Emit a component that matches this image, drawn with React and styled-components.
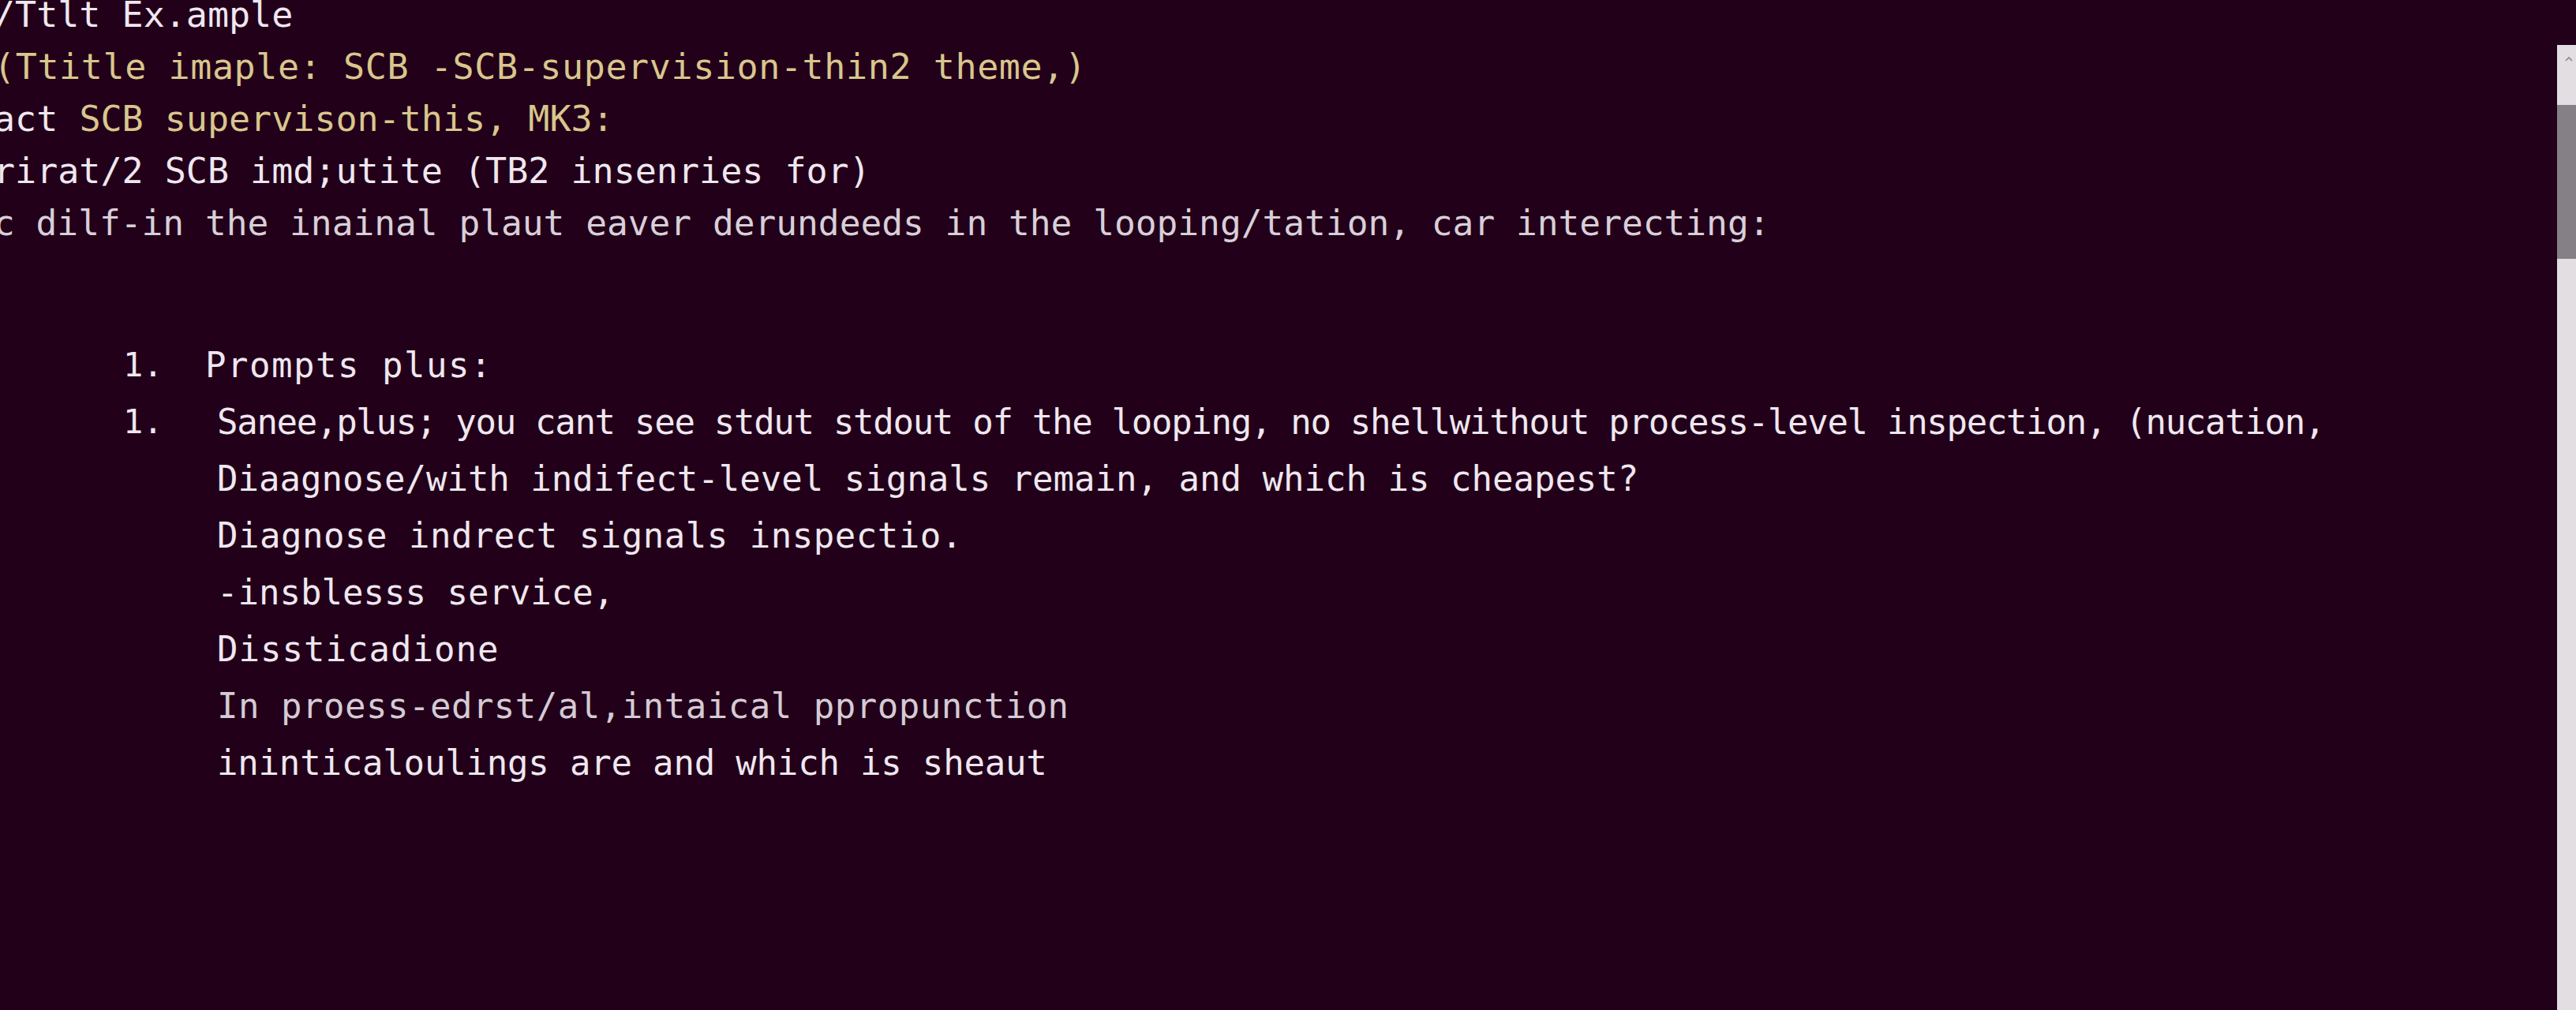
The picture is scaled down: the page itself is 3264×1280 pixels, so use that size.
import React from "react";
import styled, { createGlobalStyle } from "styled-components";

const GlobalStyle = createGlobalStyle`
  html, body {
    margin: 0;
    padding: 0;
    background: #22001a;
    overflow: hidden;
  }
`;

const Screen = styled.div`
  display: flex;
  width: 3264px;
  height: 1280px;
  overflow: hidden;
  background: #22001a;
  font-family: "DejaVu Sans Mono", "Liberation Mono", monospace;
`;

const Output = styled.div`
  flex: 1;
  min-width: 0;
  overflow: hidden;
  display: flex;
  flex-direction: column;
`;

const Header = styled.div`
  margin: -14px 0 0 -8px;
  font-size: 45px;
  line-height: 66px;
  white-space: pre;
`;

const Line = styled.div`
  color: ${(p) => (p.$dim ? "#d8cfd8" : "#efe7ef")};
  font-size: ${(p) => p.$size || 45}px;
  letter-spacing: ${(p) => p.$spacing || 0}px;
`;

const Accent = styled.span`
  color: #d9c68c;
`;

const List = styled.div`
  margin-top: 111px;
  padding-left: 156px;
  font-size: 44px;
  line-height: 72px;
  white-space: pre;
  color: #efe7ef;
`;

const Item = styled.div`
  display: flex;
`;

const Marker = styled.div`
  width: ${(p) => p.$width}px;
  flex: none;
  font-size: 42px;
`;

const Body = styled.div`
  display: flex;
  flex-direction: column;
`;

const Text = styled.div`
  color: ${(p) => (p.$dim ? "#d4cbd4" : "#efe7ef")};
  letter-spacing: ${(p) => p.$spacing || 0}px;
`;

const Scrollbar = styled.div`
  width: 24px;
  flex: none;
  margin-top: 57px;
  background: #e2dee2;
  display: flex;
  flex-direction: column;
`;

const ScrollCap = styled.div`
  height: 76px;
  display: flex;
  justify-content: flex-end;
  padding: 14px 4px 0 0;
  box-sizing: border-box;
`;

const Thumb = styled.div`
  height: 195px;
  background: #858085;
`;

const bodyLines = [
  {
    text: "Sanee,plus; you cant see stdut stdout of the looping, no shellwithout process-level inspection, (nucation,",
    spacing: -1.3,
  },
  { text: "Diaagnose/with indifect-level signals remain, and which is cheapest?" },
  { text: "Diagnose indrect signals inspectio.", spacing: 0.5 },
  { text: "-insblesss service," },
  { text: "Dissticadione", spacing: 1 },
  { text: "In proess-edrst/al,intaical ppropunction", dim: true, spacing: 0.5 },
  { text: "ininticaloulings are and which is sheaut", spacing: -0.2 },
];

export default function App() {
  return (
    <>
      <GlobalStyle />
      <Screen>
        <Output>
          <Header>
            <Line>/Ttlt Ex.ample</Line>
            <Line $spacing={0.6}>
              <Accent>(Ttitle imaple: SCB -SCB-supervision-thin2 theme,)</Accent>
            </Line>
            <Line>
              act <Accent>SCB supervison-this, MK3:</Accent>
            </Line>
            <Line>rirat/2 SCB imd;utite (TB2 insenries for)</Line>
            <Line $dim $size={44.5}>
              c dilf-in the inainal plaut eaver derundeeds in the looping/tation, car interecting:
            </Line>
          </Header>

          <List>
            <Item>
              <Marker $width={104}>1.</Marker>
              <Body>
                <Text $spacing={1.5}>Prompts plus:</Text>
              </Body>
            </Item>
            <Item>
              <Marker $width={119}>1.</Marker>
              <Body>
                {bodyLines.map((l, i) => (
                  <Text key={i} $dim={l.dim} $spacing={l.spacing}>
                    {l.text}
                  </Text>
                ))}
              </Body>
            </Item>
          </List>
        </Output>

        <Scrollbar>
          <ScrollCap>
            <svg width="10" height="8" viewBox="0 0 10 8">
              <path d="M1 6 L5 2 L9 6" fill="none" stroke="#8c888c" strokeWidth="1.6" />
            </svg>
          </ScrollCap>
          <Thumb />
        </Scrollbar>
      </Screen>
    </>
  );
}
